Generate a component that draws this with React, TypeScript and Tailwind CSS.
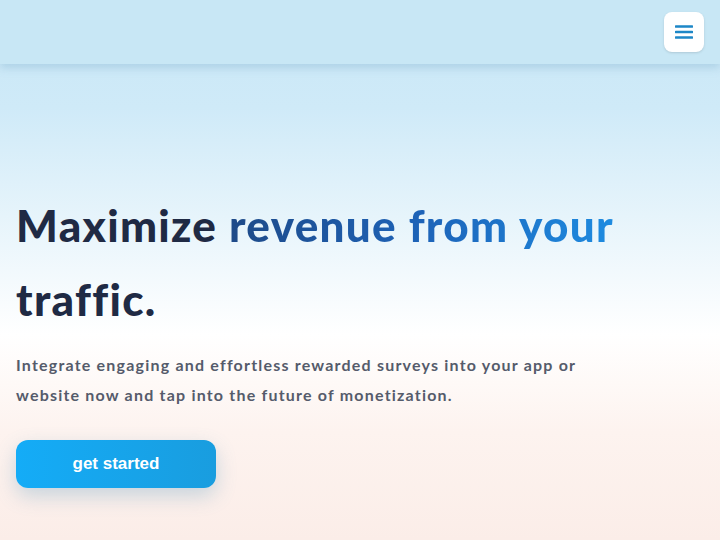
import React from "react";

const App = () => {
  return (
    <div className="min-h-[540px] w-full bg-[linear-gradient(180deg,#c8e7f6_0%,#cfeaf8_20%,#e6f4fb_40%,#ffffff_62%,#fdf3ef_80%,#fbede8_100%)] font-['Lato','Noto_Sans',sans-serif]">
      <header className="flex h-16 items-center justify-end bg-[#c8e7f5] px-4 shadow-[0_4px_8px_rgba(120,170,200,0.35)]">
        <button className="flex h-10 w-10 items-center justify-center rounded-lg bg-white shadow-sm">
          <svg width="18" height="16" viewBox="0 0 18 16" fill="none">
            <path d="M1 2.5h16M1 8h16M1 13.5h16" stroke="#1d87c7" strokeWidth="2.6" strokeLinecap="round" />
          </svg>
        </button>
      </header>
      <main className="px-4 pt-[124px]">
        <h1 className="text-[44px] font-black leading-[74px] tracking-[1.3px] text-[#1f2a44]">
          Maximize{" "}
          <span className="bg-[linear-gradient(90deg,#1e4a88_0%,#1d63b8_50%,#1e8be0_100%)] bg-clip-text text-transparent">
            revenue from your
          </span>{" "}
          traffic.
        </h1>
        <p className="mt-[14px] max-w-[590px] text-[16px] font-bold leading-[30px] tracking-[1.2px] text-[#555b6b]">
          Integrate engaging and effortless rewarded surveys into your app or website now and tap into the future of monetization.
        </p>
        <button className="mt-[30px] h-12 w-[200px] rounded-xl bg-[linear-gradient(90deg,#14acf7,#199ddf)] font-['Liberation_Sans',sans-serif] text-[17px] font-bold text-white shadow-[0_8px_20px_rgba(80,150,190,0.3)]">
          get started
        </button>
      </main>
    </div>
  );
};

export default App;
